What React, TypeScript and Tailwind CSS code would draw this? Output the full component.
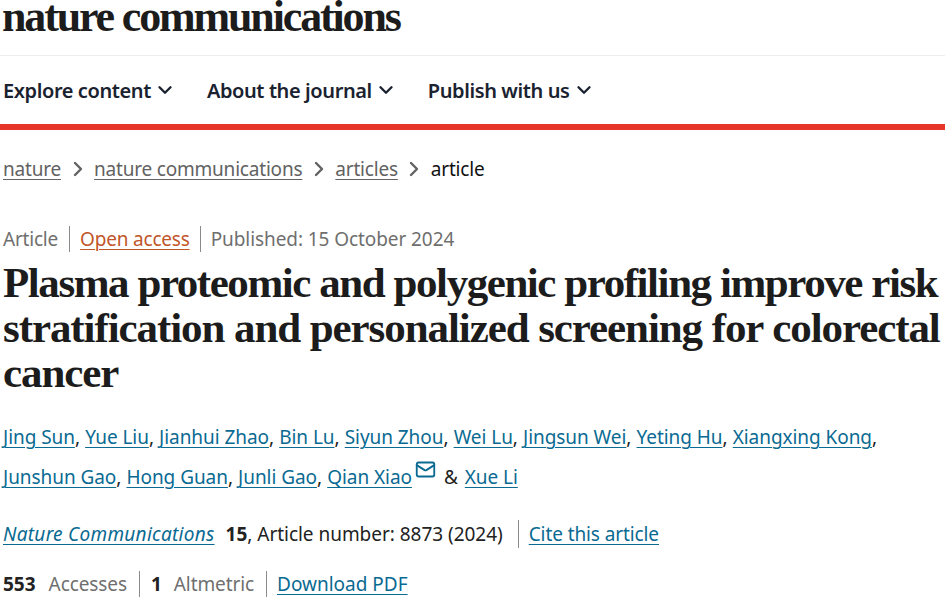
import { ChevronDown, ChevronRight, Mail } from "lucide-react";

const sans = "font-['Noto_Sans','Open_Sans',sans-serif]";

const authorsOne = ["Jing Sun", "Yue Liu", "Jianhui Zhao", "Bin Lu", "Siyun Zhou", "Wei Lu", "Jingsun Wei", "Yeting Hu", "Xiangxing Kong"];
const authorsTwo = ["Junshun Gao", "Hong Guan", "Junli Gao"];

const NavItem = ({ label }: { label: string }) => (
  <div className="flex items-center gap-[3px] text-[20px] font-semibold tracking-[-0.4px] text-[#1a2230]">
    <span>{label}</span>
    <ChevronDown size={22} strokeWidth={2.6} className="-mt-[2px]" />
  </div>
);

const Crumb = ({ label }: { label: string }) => (
  <>
    <a className="underline underline-offset-[3px] decoration-1 text-[#626262]">{label}</a>
    <ChevronRight size={24} strokeWidth={2.4} className="mx-[4.5px] text-[#626262]" />
  </>
);

const Author = ({ name, comma = true }: { name: string; comma?: boolean }) => (
  <span>
    <a className="underline underline-offset-[3px] decoration-1 text-[#0a6a92]">{name}</a>
    {comma && <span className="mr-[0.3px] text-[#222]">, </span>}
  </span>
);

export default function App() {
  return (
    <div className={`w-[945px] h-[597px] overflow-hidden bg-white ${sans}`}>
      {/* masthead */}
      <div className="h-[56px] border-b border-[#eeeeee] pl-[2px]">
        <div className="font-['Liberation_Serif',serif] font-bold text-[44px] leading-[34px] tracking-[-2.15px] text-[#1c1c1c] whitespace-nowrap">
          nature communications
        </div>
      </div>

      {/* nav */}
      <div className="h-[74px] border-b-[6px] border-[#e7352a] flex items-center gap-[31px] pl-[3px] pt-[2px]">
        <NavItem label="Explore content" />
        <NavItem label="About the journal" />
        <NavItem label="Publish with us" />
      </div>

      {/* breadcrumbs */}
      <div className="mt-[25px] pl-[3px] h-[28px] flex items-center text-[19px] tracking-[-0.2px]">
        <Crumb label="nature" />
        <Crumb label="nature communications" />
        <Crumb label="articles" />
        <span className="text-[#111]">article</span>
      </div>

      {/* article meta */}
      <div className="mt-[43px] pl-[3px] h-[26px] flex items-center text-[19px] tracking-[-0.2px] text-[#6f6f6f]">
        <span className="pr-[11px] border-r border-[#8a8a8a] leading-[26px]">Article</span>
        <a className="px-[10px] border-r border-[#8a8a8a] leading-[26px] text-[#c0562a] underline underline-offset-[3px] decoration-1">
          Open access
        </a>
        <span className="pl-[10px] tracking-[-0.08px]">Published: 15 October 2024</span>
      </div>

      <h1 className="mt-[8px] pl-[3px] font-['Liberation_Serif',serif] font-bold text-[43px] leading-[45px] text-[#1c1c1c] whitespace-nowrap">
        <span className="block tracking-[-1.44px]">Plasma proteomic and polygenic profiling improve risk</span>
        <span className="block tracking-[-1.08px]">stratification and personalized screening for colorectal</span>
        <span className="block tracking-[-1.1px]">cancer</span>
      </h1>

      {/* authors */}
      <div className="mt-[22px] pl-[3px] text-[19px] leading-[40px] tracking-[-0.06px]">
        <div>
          {authorsOne.map((a) => (
            <Author key={a} name={a} />
          ))}
        </div>
        <div className="flex items-center h-[40px]">
          <span className="whitespace-pre">
            {authorsTwo.map((a) => (
              <Author key={a} name={a} />
            ))}
            <Author name="Qian Xiao" comma={false} />
          </span>
          <Mail size={21} strokeWidth={2.1} className="ml-[3px] mb-[15px] text-[#0a6a92]" />
          <span className="ml-[8px] mr-[7px] text-[#222]">&amp;</span>
          <Author name="Xue Li" comma={false} />
        </div>
      </div>

      {/* citation */}
      <div className="mt-[23px] pl-[3px] h-[28px] flex items-center text-[19px] text-[#222]">
        <a className="italic tracking-[0.28px] text-[#0a6a92] underline underline-offset-[3px] decoration-1">Nature Communications</a>
        <span className="ml-[11px] font-bold">15</span>
        <span className="pr-[15px] tracking-[-0.03px] border-r border-[#8a8a8a] leading-[28px]">, Article number: 8873 (2024)</span>
        <a className="ml-[10px] tracking-[-0.1px] text-[#0a6a92] underline underline-offset-[3px] decoration-1">Cite this article</a>
      </div>

      {/* metrics */}
      <div className="mt-[23px] pl-[3px] h-[26px] flex items-center text-[19px] text-[#6f6f6f]">
        <span className="font-bold text-[#222]">553</span>
        <span className="ml-[13px] pr-[12px] tracking-[-0.1px] border-r border-[#8a8a8a] leading-[26px]">Accesses</span>
        <span className="ml-[11px] font-bold text-[#222]">1</span>
        <span className="ml-[12px] pr-[12px] tracking-[-0.1px] border-r border-[#8a8a8a] leading-[26px]">Altmetric</span>
        <a className="ml-[10px] text-[#0a6a92] underline underline-offset-[3px] decoration-1">Download PDF</a>
      </div>
    </div>
  );
}
